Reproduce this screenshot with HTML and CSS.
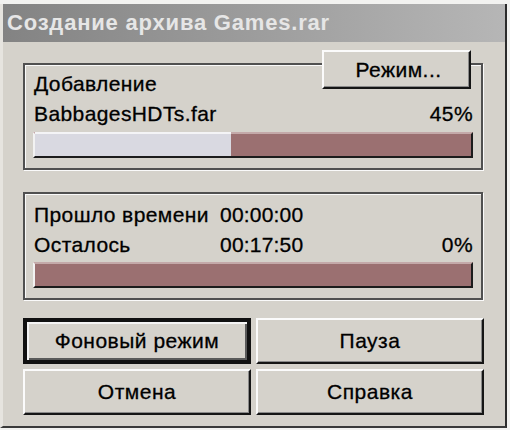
FILE: index.html
```html
<!DOCTYPE html>
<html lang="ru">
<head>
<meta charset="utf-8">
<title>Создание архива Games.rar</title>
<link rel="stylesheet" href="styles.css">
</head>
<body>
<div class="window">
  <div class="titlebar">Создание архива Games.rar</div>
  <div class="group group-top">
    <button class="btn btn-mode">Режим...</button>
    <div class="row"><span>Добавление</span></div>
    <div class="row"><span>BabbagesHDTs.far</span><span>45%</span></div>
    <div class="bar"><div class="bar-fill" style="width:45%"></div></div>
  </div>
  <div class="group group-time">
    <div class="row"><span class="label">Прошло времени</span><span class="time">00:00:00</span><span></span></div>
    <div class="row"><span class="label">Осталось</span><span class="time">00:17:50</span><span>0%</span></div>
    <div class="bar"><div class="bar-fill" style="width:0%"></div></div>
  </div>
  <div class="buttons">
    <button class="btn btn-default">Фоновый режим</button>
    <button class="btn">Пауза</button>
    <button class="btn">Отмена</button>
    <button class="btn">Справка</button>
  </div>
</div>
</body>
</html>
```
FILE: styles.css
```css
html, body {
  margin: 0;
  padding: 0;
  background: #f2f2f0;
}
body {
  font-family: "Liberation Sans", Arial, sans-serif;
  font-size: 21px;
  color: #000;
}
.window {
  margin-top: 4px;
  width: 507px;
  height: 424px;
  box-sizing: border-box;
  background: #d5d2cb;
  border-left: 3px solid #e6e4df;
  border-right: 2px solid #2c2c2c;
  border-bottom: 2px solid #3a3a3a;
}
.titlebar {
  height: 38px;
  line-height: 38px;
  padding-left: 4px;
  background: linear-gradient(to right, #838383, #b6b6b6);
  color: #e6e6e6;
  font-weight: bold;
  font-size: 22px;
  letter-spacing: 0.8px;
  white-space: nowrap;
}
.group {
  position: relative;
  width: 460px;
  box-sizing: border-box;
  margin-left: 20px;
  border: 2px solid #505050;
  box-shadow: 1px 1px 0 #fafafa, inset 1px 1px 0 #fafafa;
  padding: 4px 8px 10px 8px;
}
.group-top {
  margin-top: 21px;
}
.group-time {
  margin-top: 22px;
  padding-top: 6px;
}
.row {
  display: flex;
  justify-content: space-between;
  height: 30px;
  line-height: 30px;
  white-space: nowrap;
  letter-spacing: 0.4px;
  -webkit-text-stroke: 0.3px #000;
}
.row span:first-child {
  padding-left: 1px;
}
.group-time .label {
  width: 186px;
}
.group-time .time {
  flex: 1;
  letter-spacing: 0.2px;
}
.bar {
  margin-top: 3px;
  height: 26px;
  box-sizing: border-box;
  background: #9b7071;
  border-top: 2px solid #c4a9a9;
  border-left: 2px solid #f2f2f2;
  border-bottom: 2px solid #1c1c1c;
  border-right: 2px solid #1c1c1c;
}
.group-time .bar {
  margin-top: 2px;
}
.bar-fill {
  height: 100%;
  background: #d9d9e1;
  box-shadow: 0 -2px 0 #f4f4f6;
}
.btn {
  font-family: "Liberation Sans", Arial, sans-serif;
  font-size: 21px;
  letter-spacing: 0.5px;
  -webkit-text-stroke: 0.3px #000;
  color: #000;
  background: #d5d2cb;
  box-sizing: border-box;
  margin: 0;
  padding: 0;
  border-top: 2px solid #fbfbfb;
  border-left: 2px solid #fbfbfb;
  border-bottom: 2px solid #151515;
  border-right: 2px solid #151515;
  box-shadow: inset -1px -1px 0 #8a8a8a;
  cursor: default;
}
.btn-mode {
  position: absolute;
  top: -15px;
  right: 10px;
  width: 149px;
  height: 39px;
  padding-left: 4px;
}
.buttons {
  margin-top: 18px;
  margin-left: 20px;
  display: grid;
  grid-template-columns: 228px 228px;
  grid-template-rows: 46px 46px;
  column-gap: 5px;
  row-gap: 5px;
}
.btn-default {
  border-width: 4px;
  border-color: #111;
  box-shadow: inset 2px 2px 0 #f4f4f4, inset -2px -2px 0 #5a5a5a;
}
```
